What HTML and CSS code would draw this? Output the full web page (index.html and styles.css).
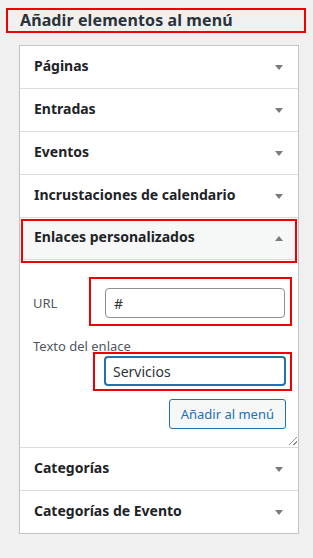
FILE: index.html
```html
<!DOCTYPE html>
<html lang="es">
<head>
    <meta charset="UTF-8">
    <meta name="viewport" content="width=device-width, initial-scale=1.0">
    <title>Añadir elementos al menú</title>
    <link rel="stylesheet" href="styles.css">
</head>
<body>

    <div class="title-box">
        <h2>Añadir elementos al menú</h2>
    </div>

    <div class="panel">
        <div class="section">
            <div class="section-head"><span>Páginas</span><span class="arrow"></span></div>
        </div>
        <div class="section">
            <div class="section-head"><span>Entradas</span><span class="arrow"></span></div>
        </div>
        <div class="section">
            <div class="section-head"><span>Eventos</span><span class="arrow"></span></div>
        </div>
        <div class="section">
            <div class="section-head"><span>Incrustaciones de calendario</span><span class="arrow"></span></div>
        </div>
        <div class="section open">
            <div class="section-head"><span>Enlaces personalizados</span><span class="arrow up"></span><span class="mark mark-head"></span></div>
            <div class="section-body">
                <div class="field-row">
                    <label for="url">URL</label>
                    <div class="field-wrap mark-url">
                        <input type="text" id="url" value="#">
                    </div>
                </div>
                <label class="label-block" for="linktext">Texto del enlace</label>
                <div class="field-wrap mark-text">
                    <input type="text" id="linktext" class="focused" value="Servicios">
                </div>
                <div class="actions">
                    <button type="button">Añadir al menú</button>
                </div>
                <span class="resize"></span>
            </div>
        </div>
        <div class="section">
            <div class="section-head"><span>Categorías</span><span class="arrow"></span></div>
        </div>
        <div class="section last">
            <div class="section-head"><span>Categorías de Evento</span><span class="arrow"></span></div>
        </div>
    </div>

</body>
</html>
```

FILE: styles.css
```css
body {
    font-family: "Noto Sans", "Open Sans", sans-serif;
    background-color: #f0f0f1;
    color: #1d2327;
    margin: 0;
    padding: 0;
}
.title-box {
    margin: 8px 7px 0 6px;
    height: 21px;
    border: 2px solid #f00000;
    display: flex;
    align-items: center;
}
.title-box h2 {
    margin: 0 0 2px 12px;
    font-size: 16px;
    line-height: 20px;
    font-weight: bold;
    color: #2c3338;
    letter-spacing: 0.1px;
}
.panel {
    width: 278px;
    margin: 12px 0 0 19px;
    background-color: #fff;
    border: 1px solid #c3c4c7;
    box-shadow: 0 1px 1px rgba(0, 0, 0, 0.04);
}
.section {
    border-bottom: 1px solid #dcdcde;
}
.section.last {
    border-bottom: none;
}
.section-head {
    position: relative;
    box-sizing: border-box;
    height: 42px;
    padding: 0 14px 3px;
    display: flex;
    align-items: center;
    justify-content: space-between;
    font-size: 14px;
    line-height: 18px;
    font-weight: bold;
    color: #1d2327;
}
.open .section-head {
    background-color: #f6f7f7;
    border-bottom: 1px solid #dcdcde;
}
.arrow {
    width: 0;
    height: 0;
    margin: 3px 1px 0 0;
    border-left: 4px solid transparent;
    border-right: 4px solid transparent;
    border-top: 5px solid #787c82;
}
.arrow.up {
    border-top: none;
    border-bottom: 5px solid #787c82;
}
.mark {
    position: absolute;
    border: 2px solid #f00000;
    pointer-events: none;
}
.mark-head {
    top: 1px;
    left: 1px;
    right: 1px;
    bottom: -4px;
}
.section-body {
    position: relative;
    padding: 17px 12px 18px 13px;
    font-size: 13px;
    line-height: 16px;
    color: #50575e;
}
.field-row {
    display: flex;
    align-items: center;
}
.field-row label {
    width: 56px;
    flex-shrink: 0;
    margin-top: 2px;
}
.field-wrap {
    box-sizing: border-box;
    flex-shrink: 0;
    border: 2px solid #f00000;
}
.mark-url {
    width: 203px;
    height: 49px;
    padding: 9px 0 0 14px;
}
.label-block {
    display: block;
    margin-top: 12px;
}
.mark-text {
    width: 199px;
    height: 39px;
    margin: -2px 0 0 60px;
    padding: 2px 0 0 9px;
}
input[type="text"] {
    box-sizing: border-box;
    width: 180px;
    height: 30px;
    margin: 0;
    padding: 0 8px;
    font-family: inherit;
    font-size: 14px;
    color: #2c3338;
    border: 1px solid #8c8f94;
    border-radius: 4px;
    background-color: #fff;
}
input.focused {
    width: 182px;
    border: 2px solid #2271b1;
    padding: 0 7px;
    outline: none;
}
.actions {
    display: flex;
    justify-content: flex-end;
    margin-top: 8px;
}
button {
    height: 30px;
    padding: 0 11px;
    font-family: inherit;
    font-size: 13px;
    color: #2271b1;
    background-color: #f6f7f7;
    border: 1px solid #2271b1;
    border-radius: 3px;
    cursor: pointer;
}
.resize {
    position: absolute;
    right: 1px;
    bottom: 2px;
    width: 8px;
    height: 8px;
    background: linear-gradient(135deg, transparent 45%, #8c8f94 45%, #8c8f94 55%, transparent 55%, transparent 72%, #8c8f94 72%, #8c8f94 82%, transparent 82%);
}
```
